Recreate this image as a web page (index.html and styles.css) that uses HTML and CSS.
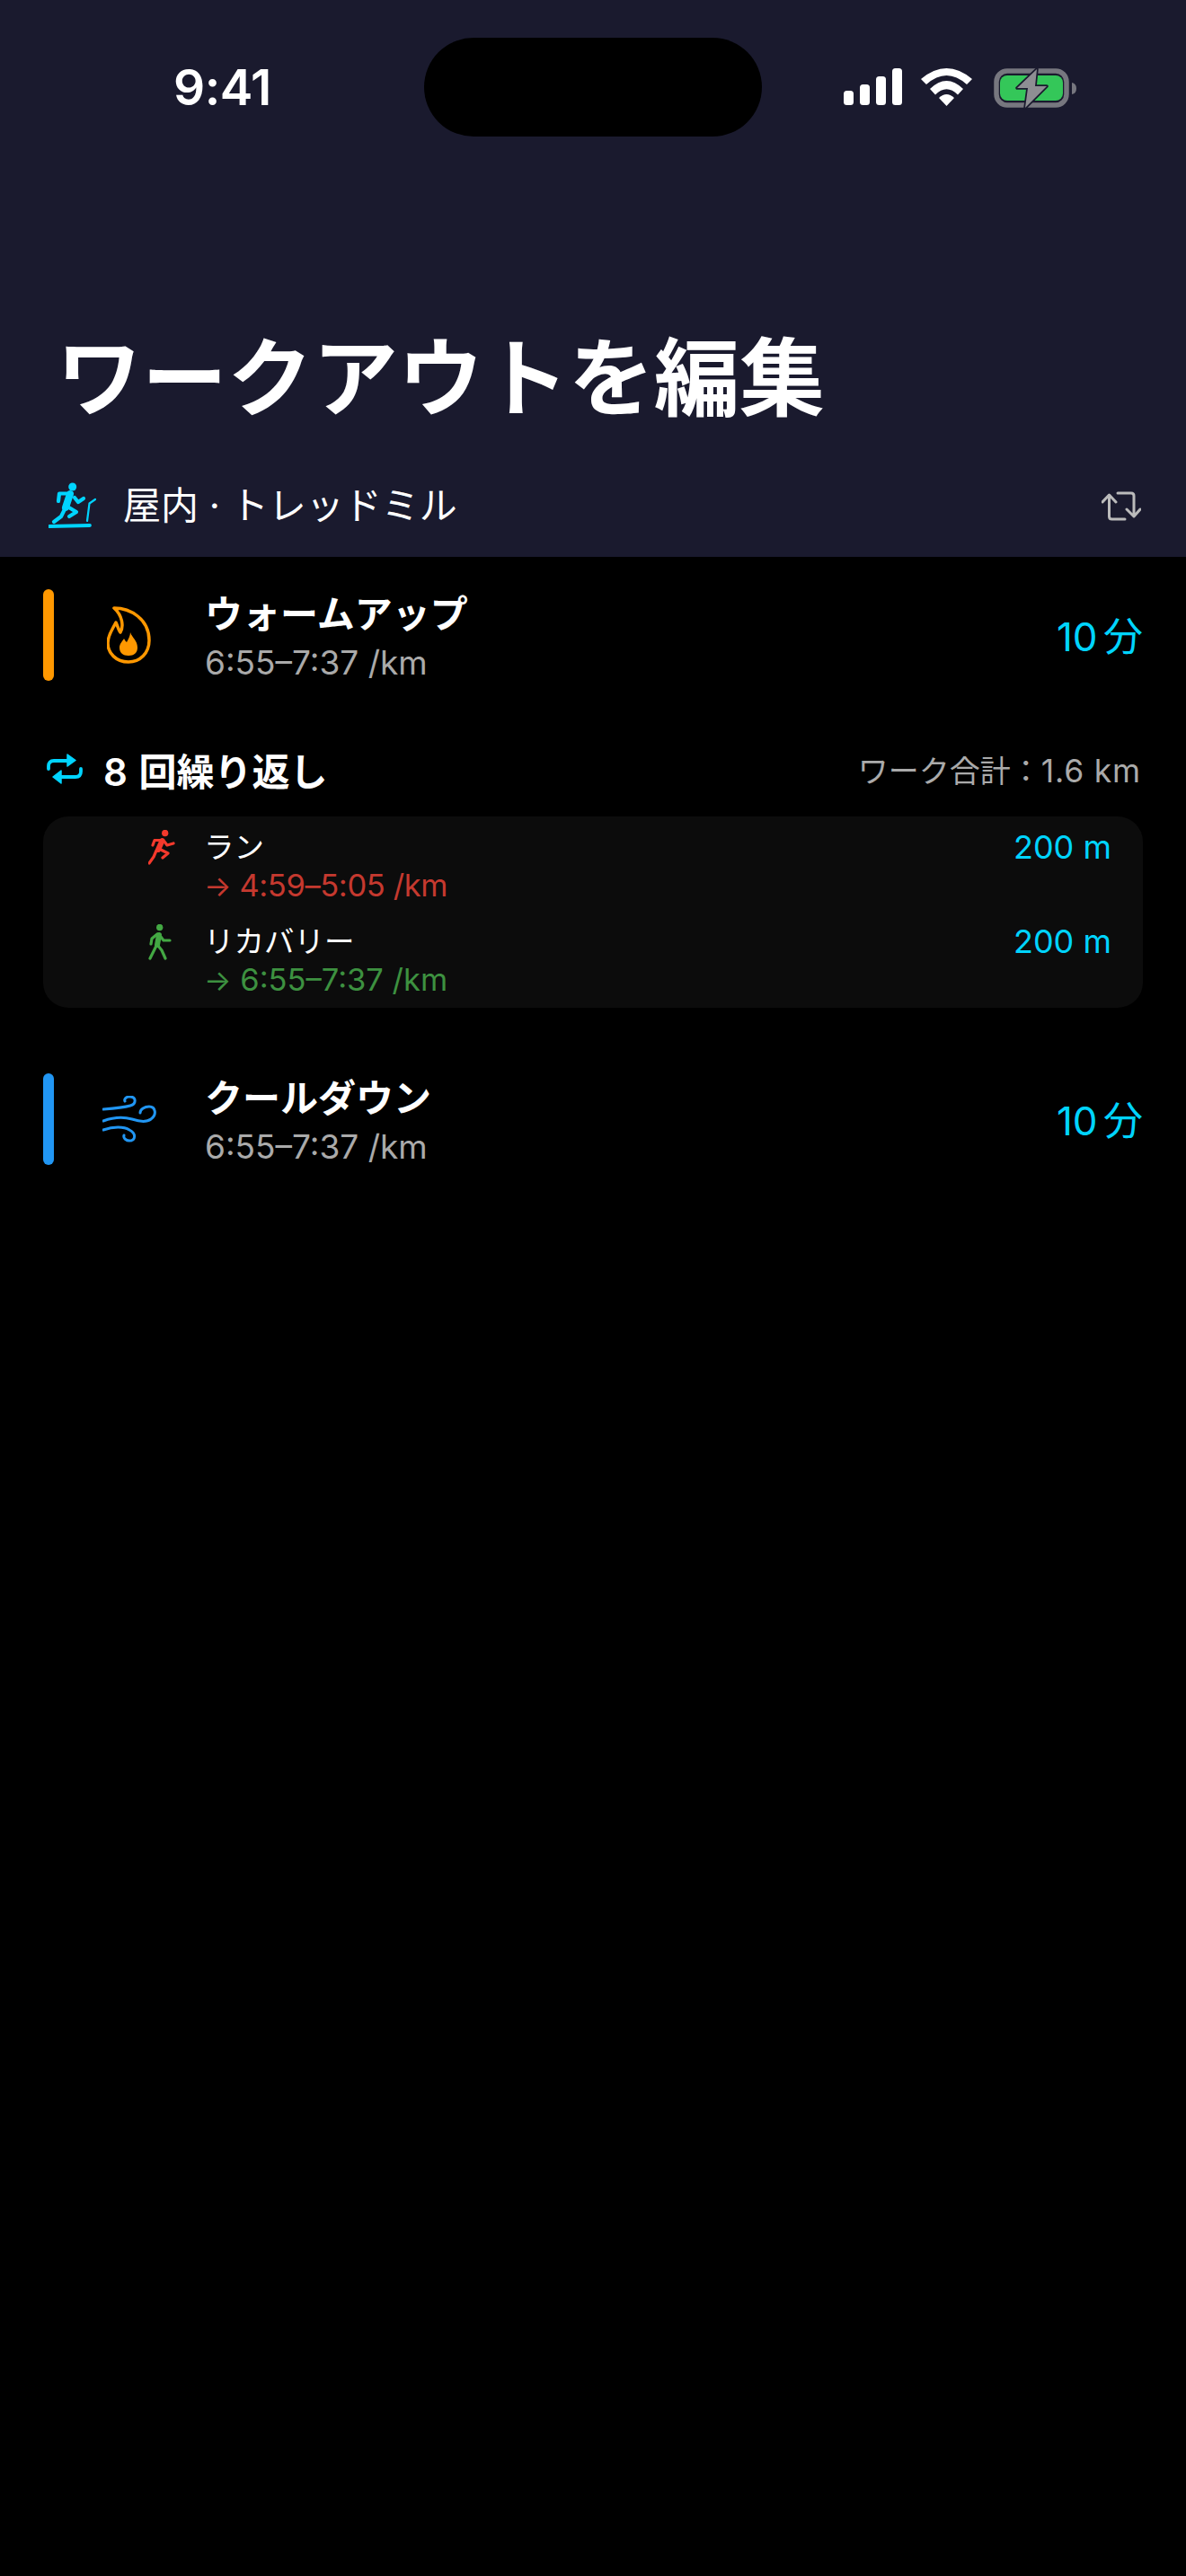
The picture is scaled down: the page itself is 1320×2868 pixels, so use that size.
FILE: index.html
```html
<!DOCTYPE html>
<html lang="ja">
<head>
    <meta charset="UTF-8">
    <meta name="viewport" content="width=device-width, initial-scale=1.0">
    <title>ワークアウトを編集</title>
    <link rel="stylesheet" href="styles.css">
</head>
<body>
    <header class="header">
        <div class="status-bar">
            <span class="time">9:41</span>
            <div class="island"></div>
            <div class="status-icons">
                <svg class="signal" width="65" height="41" viewBox="0 0 65 41" fill="#fff">
                    <rect x="0" y="25" width="11" height="16" rx="3.5"/>
                    <rect x="18" y="18" width="11" height="23" rx="3.5"/>
                    <rect x="36" y="9" width="11" height="32" rx="3.5"/>
                    <rect x="54" y="0" width="11" height="41" rx="3.5"/>
                </svg>
                <svg class="wifi" width="57" height="42" viewBox="0 0 57 42" fill="#fff">
                    <path d="M0 12Q28.5-12 57 12L51 18Q28.5-2 6 18Z"/>
                    <path d="M10 23Q28.5 5 47 23L41 29.5Q28.5 17 16 29.5Z"/>
                    <path d="M20 33Q28.5 25 37 33L28.5 42Z"/>
                </svg>
                <svg class="battery" width="93" height="46" viewBox="0 0 93 46">
                    <rect x="3" y="3" width="78" height="38" rx="12" fill="none" stroke="#77777f" stroke-width="5.5"/>
                    <rect x="7" y="8" width="70" height="28" rx="8" fill="#34c759"/>
                    <path d="M87 16Q92 17 92 22.500Q92 28 87 29Z" fill="#77777f"/>
                    <path d="M48 1L26 22H38L35 44L59 20H46Z" fill="#8e8e93" stroke="#1a1a2e" stroke-width="3.500" stroke-linejoin="round" paint-order="stroke"/>
                </svg>
            </div>
        </div>
        <h1 class="page-title">ワークアウトを編集</h1>
        <div class="mode-row">
            <svg class="mode-icon" width="54" height="52" viewBox="0 0 54 52" fill="none" stroke="#00d4ff" stroke-linecap="round" stroke-linejoin="round">
                <circle cx="26.700" cy="5" r="4.500" fill="#00d4ff" stroke="none"/>
                <path d="M24 13L19 28" stroke-width="8"/>
                <path d="M25 12.500H12L11 21M29 17L33 22L39 18M21 27L31 33L23 38M18 30L14 38L6 44" stroke-width="4.200"/>
                <path d="M1 49L46 48" stroke-width="3.800"/>
                <path d="M43 43L45.500 23.500L52 19" stroke-width="2.200"/>
            </svg>
            <span class="mode-label">屋内 · トレッドミル</span>
            <svg class="swap-icon" width="44" height="33" viewBox="0 0 44 33" fill="none" stroke="#bbbbbb" stroke-width="3" stroke-linecap="round" stroke-linejoin="round">
                <path d="M1 12L8.500 4L16 12M8.500 5V28Q8.500 31 11.500 31H26"/>
                <path d="M18 2H33Q36 2 36 5V27M28 20L36 28L43 20"/>
            </svg>
        </div>
    </header>

    <main class="workout">
        <section class="segment warmup">
            <div class="segment-bar bar-orange"></div>
            <div class="segment-icon">
                <svg width="50" height="64" viewBox="0 0 50 64" fill="none">
                    <path d="M8 2C26 2 47 14 47 38C47 52 37 62 24 62C10 62 1 52 1 41C1 32 6 26 10 18C12 22 13 27 15 29C19 22 17 10 8 2Z" stroke="#ff9800" stroke-width="3.500" stroke-linejoin="round"/>
                    <path d="M26 29C28 35 34 38 34 46C34 52 30 55 24 55C18 55 14 52 14 46C14 42 17 39 19 36C20 38 21 39 22 40C24 36 26 33 26 29Z" fill="#ff9800"/>
                </svg>
            </div>
            <div class="segment-text">
                <div class="segment-title">ウォームアップ</div>
                <div class="segment-pace">6:55–7:37 /km</div>
            </div>
            <div class="segment-value">10 分</div>
        </section>

        <section class="repeat">
            <div class="repeat-head">
                <svg class="repeat-icon" width="40" height="34" viewBox="0 0 40 34" fill="none">
                    <path d="M2 17V14Q2 8 8 8H26M38 17V20Q38 26 32 26H14" stroke="#00d4ff" stroke-width="3.800" stroke-linecap="round"/>
                    <path d="M23 1L32 7.500L23 14ZM16 19L7 26L16 33Z" fill="#00d4ff" stroke="#00d4ff" stroke-width="1.500" stroke-linejoin="round"/>
                </svg>
                <span class="repeat-title">8 回繰り返し</span>
                <span class="repeat-total">ワーク合計：<span class="total-num">1.6 km</span></span>
            </div>
            <div class="repeat-card">
                <div class="step">
                    <svg class="step-icon" width="30" height="40" viewBox="0 0 30 40" fill="none" stroke="#f4392c" stroke-linecap="round" stroke-linejoin="round">
                        <circle cx="18.700" cy="3.500" r="3.700" fill="#f4392c" stroke="none"/>
                        <path d="M15.500 12L11 22" stroke-width="6"/>
                        <path d="M16 11.500H7L5 17M18 13L21 17L28 15M12 21L22 26L16 31M9 23L6 30L1 37" stroke-width="3.200"/>
                    </svg>
                    <div class="step-text">
                        <div class="step-title">ラン</div>
                        <div class="step-pace pace-red"><span class="arrow">→</span> 4:59–5:05 /km</div>
                    </div>
                    <div class="step-value">200 m</div>
                </div>
                <div class="step">
                    <svg class="step-icon" width="30" height="40" viewBox="0 0 30 40" fill="none" stroke="#43a843" stroke-linecap="round" stroke-linejoin="round">
                        <circle cx="12.700" cy="3.500" r="3.700" fill="#43a843" stroke="none"/>
                        <path d="M12 12L10 23" stroke-width="6"/>
                        <path d="M10 11L4 16L3 22M14 14L17 18H24M9 24L2 38M11 24L15 29L19 38" stroke-width="3.200"/>
                    </svg>
                    <div class="step-text">
                        <div class="step-title">リカバリー</div>
                        <div class="step-pace pace-green"><span class="arrow">→</span> 6:55–7:37 /km</div>
                    </div>
                    <div class="step-value">200 m</div>
                </div>
            </div>
        </section>

        <section class="segment cooldown">
            <div class="segment-bar bar-blue"></div>
            <div class="segment-icon">
                <svg width="62" height="52" viewBox="0 0 62 52" fill="none" stroke="#2196f3" stroke-width="3" stroke-linecap="round">
                    <path d="M1 15C14 14 24 13 31 11C38 9 38 1 30 1C26 1 24 4 25 6"/>
                    <path d="M1 28C12 24 22 23 33 26C42 29 50 29 54 26C61 21 59 12 52 12C47 12 42 15 42 19"/>
                    <path d="M1 38C12 34 24 34 30 38C38 42 37 50 30 50C26 50 23 47 24 44"/>
                </svg>
            </div>
            <div class="segment-text">
                <div class="segment-title">クールダウン</div>
                <div class="segment-pace">6:55–7:37 /km</div>
            </div>
            <div class="segment-value">10 分</div>
        </section>
    </main>
</body>
</html>
```

FILE: styles.css
```css
* {
    box-sizing: border-box;
}

html {
    background-color: #000;
}

body {
    margin: 0;
    color: #fff;
    font-family: 'Inter', 'Noto Sans CJK JP', sans-serif;
}

.header {
    height: 620px;
    background-color: #1a1a2e;
    padding: 0 50px 0 54px;
    display: flex;
    flex-direction: column;
}

.status-bar {
    position: relative;
    height: 194px;
    display: flex;
    justify-content: space-between;
    align-items: flex-start;
    padding: 64px 0 0 139px;
}

.time {
    font-size: 55px;
    line-height: 66px;
    font-weight: 600;
    letter-spacing: -0.5px;
}

.island {
    position: absolute;
    left: 418px;
    top: 42px;
    width: 376px;
    height: 110px;
    border-radius: 55px;
    background-color: #000;
}

.status-icons {
    display: flex;
    align-items: flex-start;
    gap: 24px;
    padding: 12px 0 0;
    margin-right: 71px;
}

.signal {
    margin-right: -3px;
}

.page-title {
    margin: 163px 0 0 9px;
    font-size: 95px;
    line-height: 130px;
    font-weight: 700;
    white-space: nowrap;
}

.mode-row {
    display: flex;
    align-items: center;
    margin-top: 46px;
}

.mode-label {
    margin-left: 29px;
    font-size: 42px;
    line-height: 60px;
    font-weight: 400;
    flex: 1;
}

.workout {
    display: flex;
    flex-direction: column;
    padding: 36px 48px 0;
}

.segment {
    display: flex;
    align-items: center;
    height: 102px;
}

.segment-bar {
    width: 12px;
    height: 102px;
    border-radius: 6px;
}

.bar-orange {
    background-color: #ff9800;
}

.bar-blue {
    background-color: #2196f3;
}

.segment-icon {
    width: 170px;
    padding-left: 59px;
    display: flex;
    align-items: center;
    flex-shrink: 0;
}

.cooldown .segment-icon {
    padding-left: 54px;
}

.segment-text {
    flex: 1;
    padding-top: 4px;
    margin-left: -2px;
}

.segment-title {
    font-size: 42px;
    line-height: 54px;
    font-weight: 700;
}

.segment-pace {
    margin-top: 4px;
    font-size: 37px;
    line-height: 46px;
    color: #aaa;
}

.segment-value {
    margin-bottom: 3px;
    font-size: 44px;
    word-spacing: -6px;
    color: #00d4ff;
}

.repeat {
    margin-top: 73px;
}

.repeat-head {
    display: flex;
    align-items: center;
    height: 50px;
    padding-left: 4px;
}

.repeat-title {
    margin-left: 23px;
    font-size: 42px;
    font-weight: 600;
    word-spacing: 2px;
    flex: 1;
}

.repeat-total {
    font-size: 34px;
    color: #aaa;
    margin-right: 2px;
}

.total-num {
    font-size: 35.500px;
    letter-spacing: 0.8px;
}

.repeat-card {
    margin-top: 28px;
    height: 213px;
    border-radius: 28px;
    background-color: #0c0c0c;
    padding: 7px 35px 0 117px;
}

.step {
    display: flex;
    align-items: flex-start;
    height: 105px;
}

.step-icon {
    margin-top: 8px;
}

.step-text {
    margin-left: 32px;
    flex: 1;
}

.step-title {
    margin-top: 2px;
    font-size: 33.500px;
    line-height: 50px;
    font-weight: 400;
}

.step-pace {
    margin-top: -3px;
    font-size: 34.500px;
    line-height: 42px;
}

.arrow {
    font-size: 32px;
}

.pace-red {
    color: #c5392f;
    letter-spacing: -0.4px;
}

.pace-green {
    color: #3d9140;
}

.step-value {
    margin-top: 2px;
    font-size: 36px;
    line-height: 50px;
    color: #00d4ff;
}

.cooldown {
    margin-top: 73px;
}
```
